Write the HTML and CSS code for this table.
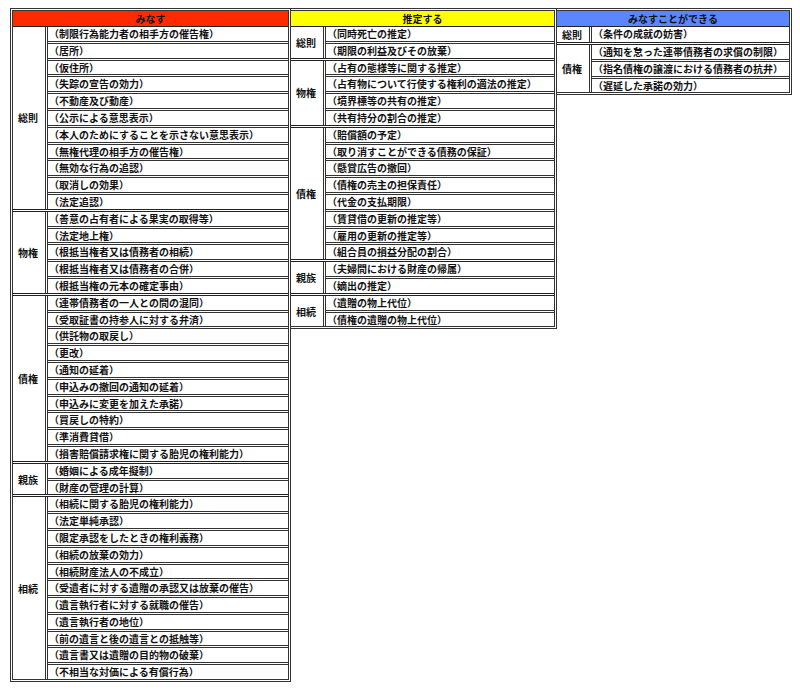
FILE: index.html
```html
<!DOCTYPE html>
<html lang="ja">
<head>
<meta charset="utf-8">
<title>みなす・推定する</title>
<link rel="stylesheet" href="styles.css">
</head>
<body>
<div class="sheet">
  <div class="col col1">
    <div class="head red">みなす</div>
    <div class="group"><div class="cat">総則</div><div class="items">
      <div class="item">（制限行為能力者の相手方の催告権）</div>
      <div class="item">（居所）</div>
      <div class="item">（仮住所）</div>
      <div class="item">（失踪の宣告の効力）</div>
      <div class="item">（不動産及び動産）</div>
      <div class="item">（公示による意思表示）</div>
      <div class="item">（本人のためにすることを示さない意思表示）</div>
      <div class="item">（無権代理の相手方の催告権）</div>
      <div class="item">（無効な行為の追認）</div>
      <div class="item">（取消しの効果）</div>
      <div class="item">（法定追認）</div>
    </div></div>
    <div class="group"><div class="cat">物権</div><div class="items">
      <div class="item">（善意の占有者による果実の取得等）</div>
      <div class="item">（法定地上権）</div>
      <div class="item">（根抵当権者又は債務者の相続）</div>
      <div class="item">（根抵当権者又は債務者の合併）</div>
      <div class="item">（根抵当権の元本の確定事由）</div>
    </div></div>
    <div class="group"><div class="cat">債権</div><div class="items">
      <div class="item">（連帯債務者の一人との間の混同）</div>
      <div class="item">（受取証書の持参人に対する弁済）</div>
      <div class="item">（供託物の取戻し）</div>
      <div class="item">（更改）</div>
      <div class="item">（通知の延着）</div>
      <div class="item">（申込みの撤回の通知の延着）</div>
      <div class="item">（申込みに変更を加えた承諾）</div>
      <div class="item">（買戻しの特約）</div>
      <div class="item">（準消費貸借）</div>
      <div class="item">（損害賠償請求権に関する胎児の権利能力）</div>
    </div></div>
    <div class="group"><div class="cat">親族</div><div class="items">
      <div class="item">（婚姻による成年擬制）</div>
      <div class="item">（財産の管理の計算）</div>
    </div></div>
    <div class="group"><div class="cat">相続</div><div class="items">
      <div class="item">（相続に関する胎児の権利能力）</div>
      <div class="item">（法定単純承認）</div>
      <div class="item">（限定承認をしたときの権利義務）</div>
      <div class="item">（相続の放棄の効力）</div>
      <div class="item">（相続財産法人の不成立）</div>
      <div class="item">（受遺者に対する遺贈の承認又は放棄の催告）</div>
      <div class="item">（遺言執行者に対する就職の催告）</div>
      <div class="item">（遺言執行者の地位）</div>
      <div class="item">（前の遺言と後の遺言との抵触等）</div>
      <div class="item">（遺言書又は遺贈の目的物の破棄）</div>
      <div class="item">（不相当な対価による有償行為）</div>
    </div></div>
  </div>

  <div class="col col2">
    <div class="head yellow">推定する</div>
    <div class="group"><div class="cat">総則</div><div class="items">
      <div class="item">（同時死亡の推定）</div>
      <div class="item">（期限の利益及びその放棄）</div>
    </div></div>
    <div class="group"><div class="cat">物権</div><div class="items">
      <div class="item">（占有の態様等に関する推定）</div>
      <div class="item">（占有物について行使する権利の適法の推定）</div>
      <div class="item">（境界標等の共有の推定）</div>
      <div class="item">（共有持分の割合の推定）</div>
    </div></div>
    <div class="group"><div class="cat">債権</div><div class="items">
      <div class="item">（賠償額の予定）</div>
      <div class="item">（取り消すことができる債務の保証）</div>
      <div class="item">（懸賞広告の撤回）</div>
      <div class="item">（債権の売主の担保責任）</div>
      <div class="item">（代金の支払期限）</div>
      <div class="item">（賃貸借の更新の推定等）</div>
      <div class="item">（雇用の更新の推定等）</div>
      <div class="item">（組合員の損益分配の割合）</div>
    </div></div>
    <div class="group"><div class="cat">親族</div><div class="items">
      <div class="item">（夫婦間における財産の帰属）</div>
      <div class="item">（嫡出の推定）</div>
    </div></div>
    <div class="group"><div class="cat">相続</div><div class="items">
      <div class="item">（遺贈の物上代位）</div>
      <div class="item">（債権の遺贈の物上代位）</div>
    </div></div>
  </div>

  <div class="col col3">
    <div class="head blue">みなすことができる</div>
    <div class="group"><div class="cat">総則</div><div class="items">
      <div class="item">（条件の成就の妨害）</div>
    </div></div>
    <div class="group"><div class="cat">債権</div><div class="items">
      <div class="item">（通知を怠った連帯債務者の求償の制限）</div>
      <div class="item">（指名債権の譲渡における債務者の抗弁）</div>
      <div class="item">（遅延した承諾の効力）</div>
    </div></div>
  </div>
</div>
</body>
</html>
```

FILE: styles.css
```css
html, body {
  margin: 0;
  padding: 0;
  background: #ffffff;
}

body {
  font-family: "Noto Sans CJK JP", "Noto Sans", sans-serif;
  color: #111;
}

.sheet {
  display: flex;
  align-items: flex-start;
  padding: 8px 0 0 10px;
}

.col {
  box-sizing: border-box;
  border: 3px double #333;
}

.col2, .col3 {
  border-left: none;
}

.col1 { width: 281px; }
.col2 { width: 266px; }
.col3 { width: 235px; }

.head {
  height: 15px;
  line-height: 15px;
  text-align: center;
  font-size: 10px;
  font-weight: 700;
  border-bottom: 1px solid #222;
}

.red { background: #ff2a00; }
.yellow { background: #ffff00; }
.blue { background: #5a86ff; }

.group {
  display: flex;
  border-bottom: 3px double #222;
}

.group:last-child {
  border-bottom: none;
}

.cat {
  box-sizing: border-box;
  width: 35px;
  flex: none;
  display: flex;
  align-items: center;
  padding-left: 5px;
  font-size: 10px;
  font-weight: 700;
  border-right: 3px double #333;
}

.items {
  flex: 1;
  display: flex;
  flex-direction: column;
}

.item {
  box-sizing: border-box;
  height: 16.8px;
  line-height: 13px;
  padding-left: 1px;
  font-size: 10px;
  font-weight: 700;
  white-space: nowrap;
  border-bottom: 3px double #333;
}

.item:last-child {
  border-bottom: none;
  height: 13.8px;
}
```
